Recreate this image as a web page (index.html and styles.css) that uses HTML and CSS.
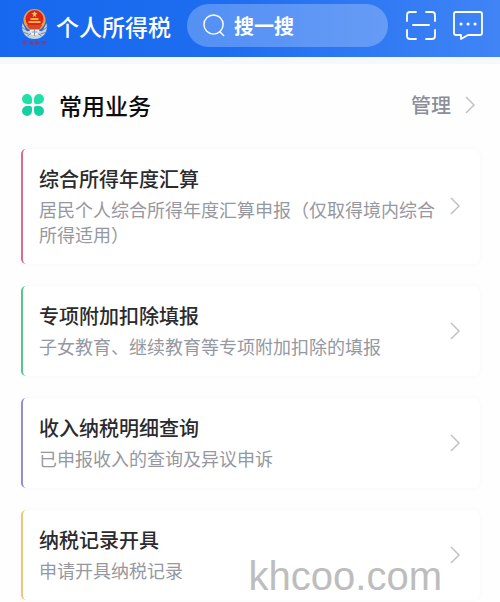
FILE: index.html
```html
<!DOCTYPE html>
<html lang="zh-CN">
<head>
    <meta charset="UTF-8">
    <meta name="viewport" content="width=device-width, initial-scale=1.0">
    <title>个人所得税</title>
    <link rel="stylesheet" href="styles.css">
</head>
<body>
    <header class="topbar">
        <svg class="emblem" viewBox="0 0 28 38" aria-hidden="true">
            <path d="M2 16C0 26 6 32 14 32S28 26 26 16L22 24H6Z" fill="#c9d3de"/>
            <path d="M1 20l6 4M2 25l6 2M27 20l-6 4M26 25l-6 2M7 29l4-3M21 29l-4-3" stroke="#7189a8" stroke-width="1"/>
            <circle cx="14" cy="13" r="11" fill="#e5a04c"/>
            <circle cx="14" cy="12" r="9" fill="#dc2418"/>
            <path d="M14 4l1 2h2l-2 2 1 2-2-1-2 1 1-2-2-2h2Z" fill="#ffd34e"/>
            <path d="M8 14h12v2H8zM10 11h8v2h-8z" fill="#f6b33e"/>
            <path d="M6 18h16l-3 4H9Z" fill="#d9482c"/>
            <path d="M9 23h10l-2 5h-6Z" fill="#eef2f5"/>
            <path d="M14 22v7M11 25h6" stroke="#8798ab" stroke-width="1"/>
            <path d="M2 35l5-1M4 34v4M9 36h4M10 34l2 4M15 36h4M16 34v4M21 35h5M23 34v4" stroke="#8b3a72" stroke-width="1.5" fill="none"/>
        </svg>
        <h1>个人所得税</h1>
        <label class="search">
            <svg class="searchIcon" viewBox="0 0 24 24" aria-hidden="true">
                <circle cx="11" cy="11" r="10"/>
                <path d="M17 18l5 5"/>
            </svg>
            <input type="search" placeholder="搜一搜" aria-label="搜一搜">
        </label>
        <button class="iconButton" aria-label="扫一扫">
            <svg viewBox="0 0 30 30" aria-hidden="true">
                <path d="M1 10V4q0-3 3-3h6M20 1h6q3 0 3 3v6M29 19v6q0 3-3 3h-6M10 28H4q-3 0-3-3v-6M7 14h16"/>
            </svg>
        </button>
        <button class="iconButton" aria-label="消息">
            <svg viewBox="0 0 30 30" aria-hidden="true">
                <path d="M3 1h24q2 0 2 2v19q0 2-2 2H15l-7 4v-4H3q-2 0-2-2V3q0-2 2-2Z"/>
                <path class="dots" d="M8 13h.1M15 13h.1M22 13h.1"/>
            </svg>
        </button>
    </header>

    <main class="container">
        <div class="sectionHead">
            <svg class="clover" viewBox="0 0 24 24" aria-hidden="true">
                <path d="M6 1a5 5 0 0 0 0 10h3q2 0 2-2V6a5 5 0 0 0-5-5Z" fill="#1fe0a8"/>
                <path d="M18 1a5 5 0 0 1 0 10h-3q-2 0-2-2V6a5 5 0 0 1 5-5Z" fill="#1fe0a8"/>
                <path d="M6 23a5 5 0 0 1 0-10h3q2 0 2 2v3a5 5 0 0 1-5 5Z" fill="#15cfa0"/>
                <path d="M18 23a5 5 0 0 0 0-10h-3q-2 0-2 2v3a5 5 0 0 0 5 5Z" fill="#15cfa0"/>
            </svg>
            <h2>常用业务</h2>
            <a class="manage" href="#">管理
                <svg class="arrow" viewBox="0 0 10 18" aria-hidden="true"><path d="M1 1l8 8-8 8"/></svg>
            </a>
        </div>

        <nav class="cards">
            <a class="card pink" href="#">
                <div class="cardText">
                    <h3>综合所得年度汇算</h3>
                    <p>居民个人综合所得年度汇算申报（仅取得境内综合所得适用）</p>
                </div>
                <svg class="arrow" viewBox="0 0 10 18" aria-hidden="true"><path d="M1 1l8 8-8 8"/></svg>
            </a>
            <a class="card green" href="#">
                <div class="cardText">
                    <h3>专项附加扣除填报</h3>
                    <p>子女教育、继续教育等专项附加扣除的填报</p>
                </div>
                <svg class="arrow" viewBox="0 0 10 18" aria-hidden="true"><path d="M1 1l8 8-8 8"/></svg>
            </a>
            <a class="card purple" href="#">
                <div class="cardText">
                    <h3>收入纳税明细查询</h3>
                    <p>已申报收入的查询及异议申诉</p>
                </div>
                <svg class="arrow" viewBox="0 0 10 18" aria-hidden="true"><path d="M1 1l8 8-8 8"/></svg>
            </a>
            <a class="card yellow" href="#">
                <div class="cardText">
                    <h3>纳税记录开具</h3>
                    <p>申请开具纳税记录</p>
                </div>
                <svg class="arrow" viewBox="0 0 10 18" aria-hidden="true"><path d="M1 1l8 8-8 8"/></svg>
            </a>
        </nav>
        <div class="watermark">khcoo.com</div>
    </main>
</body>
</html>
```

FILE: styles.css
```css
* {
    box-sizing: border-box;
}

body {
    background-color: #fefefe;
    color: #2b2b2d;
    font-family: "Noto Sans CJK SC", sans-serif;
    margin: 0;
}

h1, h2, h3, p {
    margin: 0;
    font-weight: 500;
}

a {
    color: inherit;
    text-decoration: none;
}

.topbar {
    display: flex;
    align-items: center;
    padding: 4px 17px 10px 20px;
    background: linear-gradient(to right, #1768ee 0%, #1e6df0 45%, #4084f6 100%);
}

.emblem {
    width: 29px;
    height: 38px;
    margin-right: 7px;
}

h1 {
    color: #ffffff;
    font-size: 23px;
    line-height: 32px;
}

.search {
    display: flex;
    align-items: center;
    flex: 1;
    min-width: 0;
    height: 43px;
    margin: 0 18px 0 16px;
    padding: 0 16px;
    border-radius: 22px;
    background-color: rgba(255, 255, 255, 0.25);
}

.searchIcon {
    flex: none;
    width: 23px;
    height: 23px;
    margin-right: 8px;
    fill: none;
    stroke: #ffffff;
    stroke-width: 1.5;
}

.search input {
    width: 100%;
    min-width: 0;
    padding: 0;
    border: none;
    outline: none;
    background: none;
    color: #ffffff;
    font-family: inherit;
    font-size: 20px;
    font-weight: 700;
}

.search input::placeholder {
    color: #ffffff;
    opacity: 1;
}

.iconButton {
    flex: none;
    width: 30px;
    height: 30px;
    padding: 0;
    border: none;
    background: none;
}

.iconButton + .iconButton {
    margin-left: 17px;
}

.iconButton svg {
    display: block;
    fill: none;
    stroke: #ffffff;
    stroke-width: 1.8;
    stroke-linecap: round;
    stroke-linejoin: round;
}

.iconButton .dots {
    stroke-width: 3;
}

.container {
    position: relative;
    padding: 24px 20px 2px 21px;
    border-top: 7px solid #f7f8fc;
}

.sectionHead {
    display: flex;
    align-items: center;
    height: 34px;
    margin-bottom: 27px;
}

.clover {
    width: 24px;
    height: 24px;
    margin-right: 14px;
}

h2 {
    color: #0c0c0d;
    font-size: 23px;
    line-height: 34px;
}

.manage {
    display: flex;
    align-items: center;
    gap: 14px;
    margin-left: auto;
    padding-right: 5px;
    color: #8c8f99;
    font-size: 20px;
    font-weight: 500;
    line-height: 34px;
}

.arrow {
    flex: none;
    width: 10px;
    height: 18px;
    fill: none;
    stroke: #bfc0c4;
    stroke-width: 1.5;
}

.cards {
    display: flex;
    flex-direction: column;
    gap: 22px;
}

.card {
    display: flex;
    align-items: center;
    justify-content: space-between;
    padding: 16px 20px 17px 16px;
    border-left: 2px solid;
    border-radius: 5px 8px 8px 5px;
    background-color: #ffffff;
    box-shadow: 0 0 6px rgba(0, 0, 0, 0.03);
}

.cardText {
    flex: 1;
    margin-right: 12px;
}

h3 {
    color: #2b2b2d;
    font-size: 20px;
    line-height: 28px;
    margin-bottom: 4px;
}

.card p {
    color: #96989f;
    font-size: 18px;
    font-weight: 400;
    line-height: 25px;
}

.pink {
    border-color: #dc6b8e;
}

.green {
    border-color: #52c78f;
}

.purple {
    border-color: #9a8bd0;
}

.yellow {
    border-color: #efc677;
}

.watermark {
    position: absolute;
    right: 58px;
    bottom: 3px;
    color: #bdbdbd;
    font-family: "Liberation Sans", Arial, sans-serif;
    font-size: 40px;
    line-height: 46px;
    pointer-events: none;
}
```
